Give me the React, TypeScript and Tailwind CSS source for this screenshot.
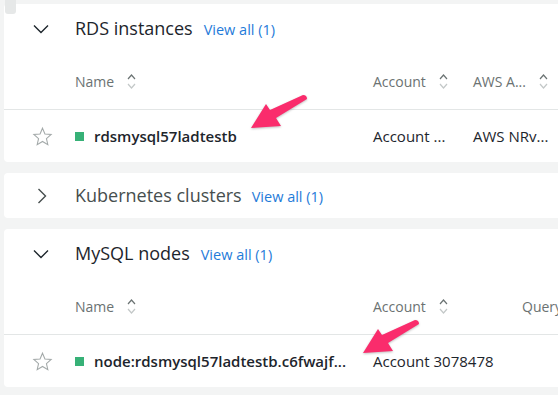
import React from 'react';

const font = { fontFamily: '"Open Sans", "Noto Sans", sans-serif' };

const ChevronDown = () => (
  <svg width="16" height="10" viewBox="0 0 16 10" fill="none" stroke="#1d252c" strokeWidth="1.4">
    <path d="M1 1.5l7 7 7-7" />
  </svg>
);

const ChevronRight = () => (
  <svg width="10" height="16" viewBox="0 0 10 16" fill="none" stroke="#464e4e" strokeWidth="1.4">
    <path d="M1.5 1l7 7-7 7" />
  </svg>
);

const SortIcon = () => (
  <svg width="9" height="17" viewBox="0 0 9 17" fill="none" strokeWidth="1.2">
    <path d="M1 6l3.5-4 3.5 4" stroke="#6b7373" />
    <path d="M1 11l3.5 4 3.5-4" stroke="#c3c8c8" />
  </svg>
);

const Star = () => (
  <svg width="21" height="21" viewBox="0 0 24 24" fill="none" stroke="#a3a9a9" strokeWidth="1.2" strokeLinejoin="miter">
    <path d="M12 2.5l2.8 6.6 7.1.6-5.4 4.7 1.6 7-6.1-3.7-6.1 3.7 1.6-7-5.4-4.7 7.1-.6z" />
  </svg>
);

type Col = { label: string; width: number; sortable?: boolean };

interface SectionProps {
  title: string;
  count: number;
  cols: Col[];
  name: string;
  cells: string[];
}

const HeaderCell = ({ col }: { col: Col }) => (
  <div className="flex items-center shrink-0 text-[14px] text-[#6b7272]" style={{ width: col.width }}>
    <span className="whitespace-nowrap">{col.label}</span>
    {col.sortable && (
      <span className="ml-[13px] flex items-center">
        <SortIcon />
      </span>
    )}
  </div>
);

const Section: React.FC<SectionProps> = ({ title, count, cols, name, cells }) => (
  <div className="bg-white rounded-[4px] w-[600px]">
    <div className="flex items-center h-[49px]">
      <div className="w-[71px] flex justify-center pl-[2px]">
        <ChevronDown />
      </div>
      <span className="text-[18px] text-[#1d252c]">{title}</span>
      <span className="ml-[11px] text-[14.5px] text-[#1f7bd9] mt-[2px]">View all ({count})</span>
    </div>
    <div className="flex items-center h-[57px] pt-[1px] border-b border-[#e3e6e6]">
      <div className="w-[71px] shrink-0" />
      {cols.map((c) => (
        <HeaderCell key={c.label} col={c} />
      ))}
    </div>
    <div className="flex items-center h-[52px] text-[15px] text-[#1d252c]">
      <div className="w-[71px] shrink-0 flex justify-center pl-[5px]">
        <Star />
      </div>
      <div className="flex items-center shrink-0" style={{ width: cols[0].width }}>
        <span className="w-[9px] h-[9px] shrink-0 bg-[#37b177] mr-[10px]" />
        <span className="font-semibold whitespace-nowrap">{name}</span>
      </div>
      {cells.map((c, i) => (
        <div key={i} className="shrink-0 whitespace-nowrap" style={{ width: cols[i + 1].width }}>
          {c}
        </div>
      ))}
    </div>
  </div>
);

const Arrow = ({ x, y }: { x: number; y: number }) => (
  <svg
    className="absolute"
    style={{ left: x, top: y, filter: 'drop-shadow(0 1px 1px rgba(0,0,0,0.25))' }}
    width="62"
    height="40"
    viewBox="0 0 62 40"
  >
    <path d="M2 34 L17 10 L21 16 L54 1 Q58 1 58 5 L27 24 L32 32 Z" fill="#fa2c6c" />
  </svg>
);

export default function App() {
  return (
    <div className="relative w-[558px] h-[395px] overflow-hidden bg-[#f3f4f4]" style={font}>
      <div className="absolute left-[5px] top-0 w-[11px] h-[14px] bg-[#e6e8e8] rounded-b-[3px] z-10" />
      <div className="flex flex-col gap-[11px] pl-[4px] pt-[4px]">
        <Section
          title="RDS instances"
          count={1}
          cols={[
            { label: 'Name', width: 298, sortable: true },
            { label: 'Account', width: 100, sortable: true },
            { label: 'AWS A...', width: 100, sortable: true },
          ]}
          name="rdsmysql57ladtestb"
          cells={['Account ...', 'AWS NRv...']}
        />
        <div className="bg-white rounded-[4px] w-[600px] h-[45px] flex items-center">
          <div className="w-[71px] flex justify-center pl-[4px]">
            <ChevronRight />
          </div>
          <span className="text-[18px] text-[#464e4e]">Kubernetes clusters</span>
          <span className="ml-[10px] text-[14.5px] text-[#1f7bd9] mt-[2px]">View all (1)</span>
        </div>
        <Section
          title="MySQL nodes"
          count={1}
          cols={[
            { label: 'Name', width: 298, sortable: true },
            { label: 'Account', width: 149, sortable: true },
            { label: 'Query', width: 100 },
          ]}
          name="node:rdsmysql57ladtestb.c6fwajf..."
          cells={['Account 3078478', '']}
        />
      </div>
      <Arrow x={249} y={94} />
      <Arrow x={361} y={319} />
    </div>
  );
}
